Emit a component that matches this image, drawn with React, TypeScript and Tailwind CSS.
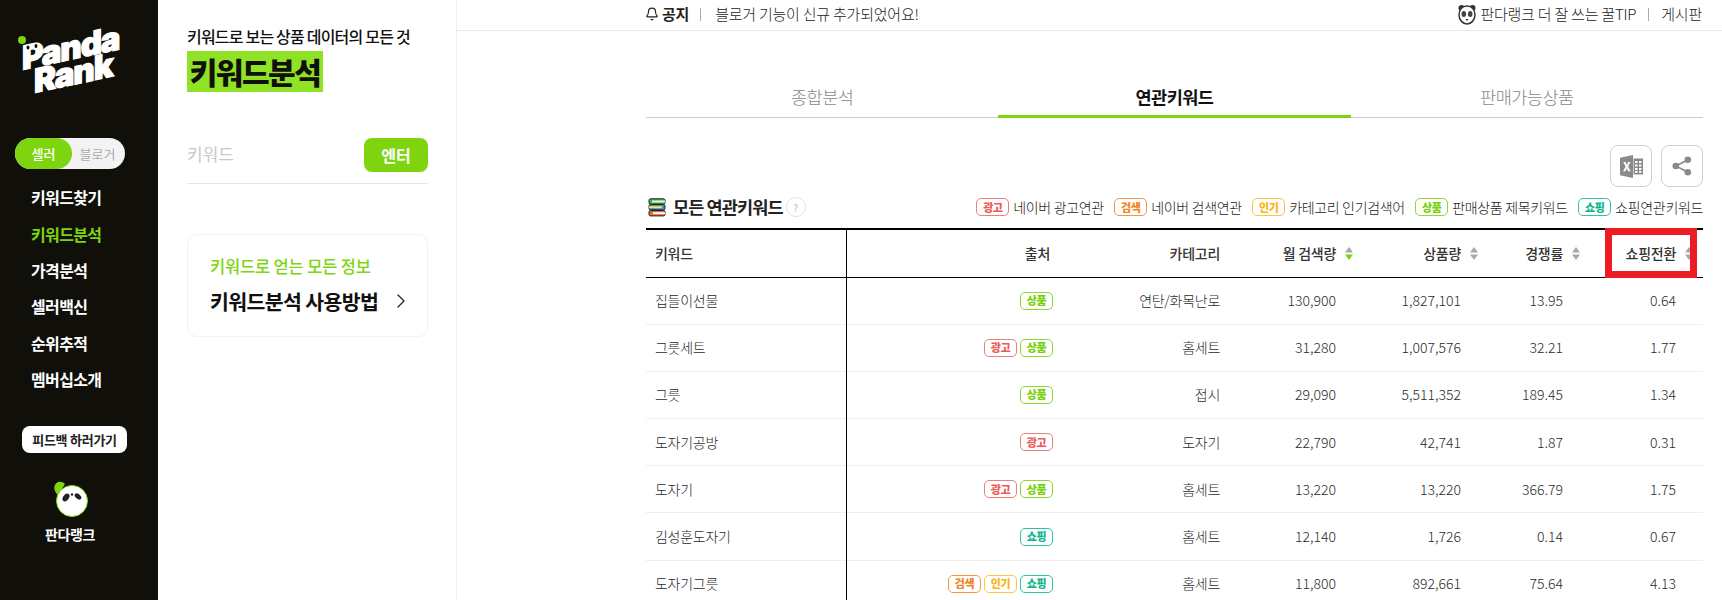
import { Bell, ChevronRight } from "lucide-react";

const navItems = ["키워드찾기", "키워드분석", "가격분석", "셀러백신", "순위추적", "멤버십소개"];

type Tag = "광고" | "검색" | "인기" | "상품" | "쇼핑";

const tagStyles: Record<Tag, string> = {
  광고: "border-[#e88080] text-[#ec5a5a]",
  검색: "border-[#f29645] text-[#f2851f]",
  인기: "border-[#fbc544] text-[#fbb415]",
  상품: "border-[#8fd92e] text-[#76d00a]",
  쇼핑: "border-[#2cc4a4] text-[#10b48c]",
};

const legend: { tag: Tag; label: string }[] = [
  { tag: "광고", label: "네이버 광고연관" },
  { tag: "검색", label: "네이버 검색연관" },
  { tag: "인기", label: "카테고리 인기검색어" },
  { tag: "상품", label: "판매상품 제목키워드" },
  { tag: "쇼핑", label: "쇼핑연관키워드" },
];

const rows: { kw: string; tags: Tag[]; cat: string; vol: string; items: string; comp: string; conv: string }[] = [
  { kw: "집들이선물", tags: ["상품"], cat: "연탄/화목난로", vol: "130,900", items: "1,827,101", comp: "13.95", conv: "0.64" },
  { kw: "그릇세트", tags: ["광고", "상품"], cat: "홈세트", vol: "31,280", items: "1,007,576", comp: "32.21", conv: "1.77" },
  { kw: "그릇", tags: ["상품"], cat: "접시", vol: "29,090", items: "5,511,352", comp: "189.45", conv: "1.34" },
  { kw: "도자기공방", tags: ["광고"], cat: "도자기", vol: "22,790", items: "42,741", comp: "1.87", conv: "0.31" },
  { kw: "도자기", tags: ["광고", "상품"], cat: "홈세트", vol: "13,220", items: "13,220", comp: "366.79", conv: "1.75" },
  { kw: "김성훈도자기", tags: ["쇼핑"], cat: "홈세트", vol: "12,140", items: "1,726", comp: "0.14", conv: "0.67" },
  { kw: "도자기그릇", tags: ["검색", "인기", "쇼핑"], cat: "홈세트", vol: "11,800", items: "892,661", comp: "75.64", conv: "4.13" },
];

function Badge({ tag }: { tag: Tag }) {
  return (
    <span className={`inline-flex h-[18px] w-[33px] shrink-0 items-center justify-center rounded-[5px] border text-[11px] font-black leading-none tracking-[-0.04em] ${tagStyles[tag]}`}>
      {tag}
    </span>
  );
}

function SortArrow({ active }: { active?: boolean }) {
  return (
    <svg width="8" height="13" viewBox="0 0 8 13" className="ml-[9px] shrink-0">
      <path d="M4 0 8 5.600H0z" fill="#a8a8a8" />
      <path d="M4 13 0 7.400h8z" fill={active ? "#7ed50f" : "#a8a8a8"} />
    </svg>
  );
}

function PandaFace() {
  return (
    <svg width="36" height="38" viewBox="0 0 36 38">
      <path d="M4 4.500c2.500-2.500 6.500-2 9 .5l-7 11c-3-2-5.500-8-2-11.500z" fill="#7ed50f" />
      <circle cx="20" cy="22" r="15.500" fill="#fff" stroke="#7ed50f" strokeWidth="1" />
      <ellipse cx="14" cy="18.500" rx="2.800" ry="4.300" transform="rotate(38 14 18.500)" fill="#222" />
      <ellipse cx="26" cy="17.500" rx="2.400" ry="3.800" transform="rotate(-50 26 17.500)" fill="#222" />
      <circle cx="20" cy="15.500" r="1.200" fill="#222" />
    </svg>
  );
}

function PandaSmall() {
  return (
    <svg width="18" height="21" viewBox="0 0 18 21">
      <circle cx="3.500" cy="4" r="3" fill="#333" />
      <circle cx="14.500" cy="4" r="3" fill="#333" />
      <path d="M9 2C4 2 1 6 1 11c0 5 4 9 8 9s8-4 8-9c0-5-3-9-8-9z" fill="#fff" stroke="#333" strokeWidth="1.500" />
      <ellipse cx="5.800" cy="10" rx="2.300" ry="3" fill="#444" />
      <ellipse cx="12.200" cy="10" rx="2.300" ry="3" fill="#444" />
      <path d="M7.500 15h3L9 17z" fill="#333" />
    </svg>
  );
}

function BooksIcon() {
  return (
    <svg width="18" height="19" viewBox="0 0 18 19">
      <rect x="1" y="0.800" width="16" height="5.400" rx="1.500" fill="#3eb24a" stroke="#222" strokeWidth="1" />
      <rect x="4" y="2.500" width="13" height="2" fill="#f4f0d8" />
      <rect x="1" y="6.500" width="16" height="5.400" rx="1.500" fill="#3f8fcf" stroke="#222" strokeWidth="1" />
      <rect x="1" y="8.200" width="13" height="2" fill="#f6df6a" />
      <rect x="1" y="12.500" width="16" height="5.400" rx="1.500" fill="#ee6a2c" stroke="#222" strokeWidth="1" />
      <rect x="5" y="14.200" width="12" height="2" fill="#fff" />
    </svg>
  );
}

function ExcelIcon() {
  return (
    <svg width="23" height="23" viewBox="0 0 23 23">
      <path d="M0 2.800 13 0v23L0 20.200z" fill="#8a8a8a" />
      <path d="M13.500 3.500H23v16h-9.500z" fill="#8a8a8a" />
      <path d="M15 6h2.500v2H15zM19 6h2.500v2H19zM15 9.500h2.500v2H15zM19 9.500h2.500v2H19zM15 13h2.500v2H15zM19 13h2.500v2H19zM15 16h2.500v1.800H15zM19 16h2.500v1.800H19z" fill="#fff" />
      <path d="M3.200 7h2.400l1.300 2.900L8.200 7h2.300L8.100 11.500l2.500 4.700H8.200l-1.400-3-1.400 3H3.100l2.500-4.700z" fill="#fff" />
    </svg>
  );
}

function ShareIcon() {
  return (
    <svg width="20" height="20" viewBox="0 0 20 20">
      <path d="M15.500 4 4 10l11.500 6" fill="none" stroke="#8a8a8a" strokeWidth="1.800" />
      <circle cx="15.800" cy="3.800" r="3.300" fill="#8a8a8a" />
      <circle cx="3.800" cy="10" r="3.300" fill="#8a8a8a" />
      <circle cx="15.800" cy="16.200" r="3.300" fill="#8a8a8a" />
    </svg>
  );
}

function Logo() {
  return (
    <div className="relative ml-[18px] mt-[29px] h-[79px] w-[110px] font-['Inter',sans-serif] font-black leading-none tracking-[-0.07em] text-white [-webkit-text-stroke:1.2px_white]">
      <span className="absolute left-0 top-[7px] h-[8px] w-[8px] rounded-full bg-[#7ed50f]" />
      <span className="absolute left-[4px] top-[13px] origin-left -skew-y-[12deg] text-[33px]">Panda</span>
      <span className="absolute left-[16px] top-[36px] origin-left -skew-y-[12deg] text-[33px]">Rank</span>
      <svg width="16" height="8" viewBox="0 0 16 8" className="absolute left-[7px] top-[14px]">
        <ellipse cx="3" cy="4.500" rx="1.500" ry="2" fill="#100f0a" />
        <ellipse cx="11" cy="3" rx="1.500" ry="2" fill="#100f0a" />
      </svg>
    </div>
  );
}

function Sidebar() {
  return (
    <aside className="flex h-full w-[158px] shrink-0 flex-col bg-[#100f0a]">
      <Logo />
      <div className="ml-[15px] mt-[30px] flex h-[31px] w-[110px] items-center rounded-full bg-[#f3f3f3] text-[13px] leading-none">
        <span className="flex h-full w-[57px] items-center justify-center rounded-full bg-[#7ed50f] font-medium text-white">셀러</span>
        <span className="flex-1 pr-[2px] text-center font-light text-[#888]">블로거</span>
      </div>
      <nav className="ml-[31px] mt-[10px] flex flex-col text-[16px] font-bold tracking-[-0.04em] text-white">
        {navItems.map((item) => (
          <a key={item} className={`flex h-[36.400px] items-center ${item === "키워드분석" ? "text-[#7ed50f]" : ""}`}>
            {item}
          </a>
        ))}
      </nav>
      <div className="ml-[22px] mt-[29px] flex h-[27px] w-[105px] items-center justify-center rounded-[8px] bg-white text-[13px] font-bold tracking-[-0.02em] text-[#222]">
        피드백 하러가기
      </div>
      <div className="mt-[26px] flex flex-col items-center pr-[18px]">
        <PandaFace />
        <span className="mt-[7px] text-[14px] font-bold tracking-[-0.03em] text-white">판다랭크</span>
      </div>
    </aside>
  );
}

function SearchPanel() {
  return (
    <section className="h-full w-[299px] shrink-0 border-r border-[#eeeeee] bg-white pl-[29px] pr-[28px] pt-[24px]">
      <p className="text-[16px] font-medium leading-[24px] tracking-[-0.05em] text-[#111]">키워드로 보는 상품 데이터의 모든 것</p>
      <h1 className="mt-[3px] flex h-[41px] w-[136px] items-center justify-center bg-[#8fe225] text-[30px] font-black tracking-[-0.05em] text-[#100f0a]">키워드분석</h1>
      <div className="mt-[46px] flex items-start justify-between border-b border-[#e5e5e5] pb-[11px]">
        <span className="pt-[3px] text-[17px] leading-[26px] text-[#c8c8c8]">키워드</span>
        <button className="h-[34px] w-[64px] rounded-[8px] bg-[#7ed50f] text-[16px] font-bold text-white">엔터</button>
      </div>
      <div className="mt-[50px] flex h-[103px] items-end justify-between rounded-[10px] border border-[#f3f3f3] pb-[22px] pl-[22px] pr-[14px]">
        <div>
          <p className="text-[16.500px] font-medium leading-[20px] tracking-[-0.01em] text-[#7ed50f]">키워드로 얻는 모든 정보</p>
          <p className="mt-[12px] whitespace-nowrap text-[20.500px] font-bold leading-[26px] tracking-[-0.03em] text-[#111]">키워드분석 사용방법</p>
        </div>
        <ChevronRight size={24} strokeWidth={1.25} className="mb-[1px] text-[#222]" />
      </div>
    </section>
  );
}

function TopBar() {
  return (
    <header className="flex h-[31px] items-center justify-between border-b border-[#e8e8e8] pb-[2px] pl-[189px] pr-[20px] text-[15px] font-light tracking-[-0.015em] text-[#222]">
      <div className="flex items-center">
        <Bell size={14} strokeWidth={2} className="-ml-[1px] text-[#222]" />
        <span className="ml-[3px] font-bold text-[#222]">공지</span>
        <span className="ml-[11px] mr-[14px] h-[13px] w-px bg-[#aaa]" />
        <span>블로거 기능이 신규 추가되었어요!</span>
      </div>
      <div className="flex items-center">
        <PandaSmall />
        <span className="ml-[4px]">판다랭크 더 잘 쓰는 꿀TIP</span>
        <span className="mx-[12px] h-[13px] w-px bg-[#aaa]" />
        <span>게시판</span>
      </div>
    </header>
  );
}

function Tabs() {
  const base = "flex h-[40px] items-start justify-center pt-[6px] text-[17.500px] tracking-[-0.03em]";
  return (
    <div className="mt-[47px] grid grid-cols-3">
      <div className={`${base} border-b-[1.500px] border-[#cccccc] font-light text-[#888]`}>종합분석</div>
      <div className={`${base} border-b-[3px] border-[#7ed50f] font-bold text-[#111]`}>연관키워드</div>
      <div className={`${base} border-b-[1.500px] border-[#cccccc] font-light text-[#888]`}>판매가능상품</div>
    </div>
  );
}

function KeywordTable() {
  const th = "h-[48px] border-b border-b-black pr-[3px] text-[14px] font-medium tracking-[-0.02em] text-[#333]";
  const td = "pr-[20px] text-right";
  return (
    <div className="relative mt-[9px]">
      <table className="w-[1057px] table-fixed border-collapse border-t-2 border-t-black text-[14px] font-light text-[#2a2a2a]">
        <colgroup>
          <col className="w-[200px]" />
          <col className="w-[227px]" />
          <col className="w-[167px]" />
          <col className="w-[116px]" />
          <col className="w-[125px]" />
          <col className="w-[102px]" />
          <col className="w-[120px]" />
        </colgroup>
        <thead>
          <tr>
            <th className={`${th} border-r border-r-black pl-[9px] text-left`}>키워드</th>
            <th className={`${th} !pr-[23px] text-right`}>출처</th>
            <th className={`${th} !pr-[20px] text-right`}>카테고리</th>
            <th className={th}><div className="flex items-center justify-end">월 검색량<SortArrow active /></div></th>
            <th className={th}><div className="flex items-center justify-end">상품량<SortArrow /></div></th>
            <th className={th}><div className="flex items-center justify-end">경쟁률<SortArrow /></div></th>
            <th className={`${th} !pr-[10px]`}><div className="flex items-center justify-end">쇼핑전환<SortArrow /></div></th>
          </tr>
        </thead>
        <tbody>
          {rows.map((row) => (
            <tr key={row.kw} className="h-[47.200px] border-b border-[#eeeeee]">
              <td className="border-r border-r-black pl-[9px] tracking-[-0.02em]">{row.kw}</td>
              <td className={td}>
                <div className="flex justify-end gap-[3px]">
                  {row.tags.map((tag) => <Badge key={tag} tag={tag} />)}
                </div>
              </td>
              <td className={`${td} tracking-[-0.02em]`}>{row.cat}</td>
              <td className={td}>{row.vol}</td>
              <td className={td}>{row.items}</td>
              <td className={td}>{row.comp}</td>
              <td className="pr-[27px] text-right">{row.conv}</td>
            </tr>
          ))}
        </tbody>
      </table>
      <div className="absolute left-[959px] top-0 h-[50px] w-[92px] border-[7px] border-[#ed1c24]" />
    </div>
  );
}

function Results() {
  return (
    <main className="min-w-0 flex-1 overflow-hidden bg-white">
      <TopBar />
      <div className="ml-[189px] w-[1057px]">
        <Tabs />
        <div className="mt-[27px] flex justify-end gap-[9px]">
          <button className="flex h-[42px] w-[42px] items-center justify-center rounded-[8px] border border-[#cfcfcf]"><ExcelIcon /></button>
          <button className="flex h-[42px] w-[42px] items-center justify-center rounded-[8px] border border-[#cfcfcf]"><ShareIcon /></button>
        </div>
        <div className="mt-[8px] flex h-[24px] items-center justify-between">
          <div className="flex items-center pl-[2px]">
            <BooksIcon />
            <h2 className="ml-[7px] text-[17.500px] font-bold tracking-[-0.05em] text-[#222]">모든 연관키워드</h2>
            <span className="ml-[3px] flex h-[20px] w-[20px] items-center justify-center rounded-full border border-[#e2e2e2] text-[10px] text-[#bbb]">?</span>
          </div>
          <div className="flex items-center text-[14px] font-light tracking-[-0.025em] text-[#222]">
            {legend.map((item) => (
              <span key={item.tag} className="ml-[10.500px] flex items-center gap-[4px]">
                <Badge tag={item.tag} />
                {item.label}
              </span>
            ))}
          </div>
        </div>
        <KeywordTable />
      </div>
    </main>
  );
}

export default function App() {
  return (
    <div className="flex h-[600px] overflow-hidden bg-white font-['Noto_Sans_CJK_KR','Noto_Sans',sans-serif]">
      <Sidebar />
      <SearchPanel />
      <Results />
    </div>
  );
}
